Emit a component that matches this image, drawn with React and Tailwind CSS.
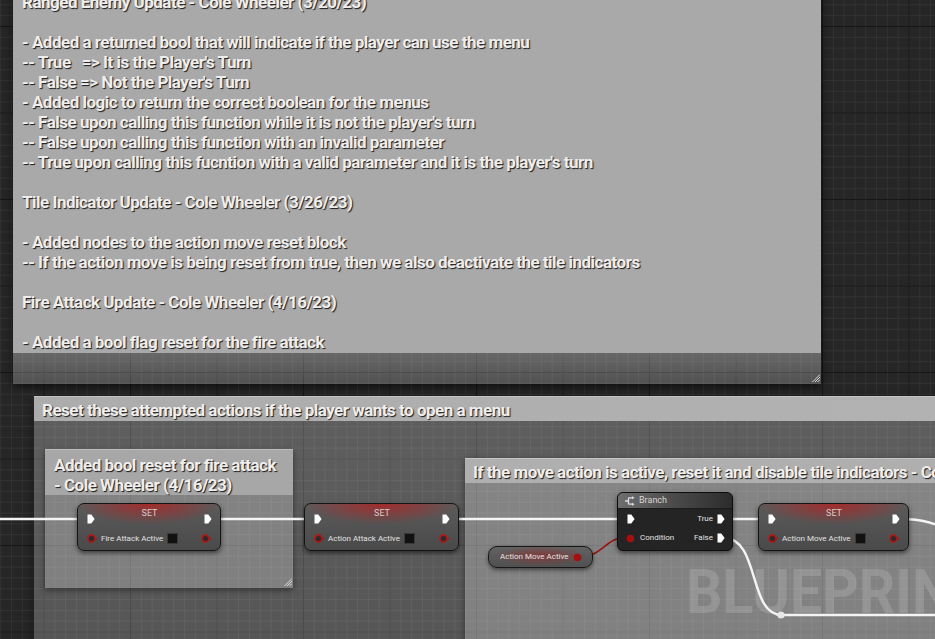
import React from "react";

const Exec = () => (
  <svg width="8" height="10" viewBox="0 0 8 10" className="block shrink-0">
    <path d="M0.5 0.5H4.3L7.6 5L4.3 9.5H0.5Z" fill="#ffffff" />
  </svg>
);

const PinHollow = () => (
  <svg width="11" height="9" viewBox="0 0 11 9" className="block shrink-0">
    <circle cx="4.5" cy="4.5" r="3.4" fill="#2b2b2b" stroke="#b31414" strokeWidth="1.6" />
    <path d="M8.7 2.7L10.7 4.5L8.7 6.3Z" fill="#b31414" />
  </svg>
);

const PinFilled = () => (
  <svg width="9" height="9" viewBox="0 0 9 9" className="block shrink-0">
    <circle cx="4.5" cy="4.5" r="3.8" fill="#a80e0e" />
  </svg>
);

const Grip = ({ className }) => (
  <svg width="8" height="8" viewBox="0 0 8 8" className={className}>
    <path d="M8 0.5L0.5 8M8 3L3 8M8 5.5L5.5 8" stroke="#d8d8d8" strokeWidth="1" />
  </svg>
);

const Check = () => (
  <div className="w-[11px] h-[11px] shrink-0 bg-[#111111] border border-[#3a3a3a]" />
);

function SetNode({ pos, label }) {
  return (
    <div
      className={`absolute top-[503px] h-[48px] rounded-[7px] border border-[#141414] bg-[linear-gradient(to_bottom,#5b5b5b,#4a4a4a)] shadow-[0_2px_5px_rgba(0,0,0,0.55)] overflow-hidden ${pos}`}
    >
      <div className="absolute inset-x-0 top-0 h-[20px] bg-[radial-gradient(ellipse_at_50%_0%,rgba(175,35,35,0.85),rgba(175,35,35,0)_72%)]" />
      <div className="relative flex items-start justify-between pl-[9px] pr-[8px] pt-[10px]">
        <Exec />
        <div className="-mt-[6px] text-[9px] leading-[10px] text-[#d0d0d0]">SET</div>
        <Exec />
      </div>
      <div className="relative flex items-center pl-[9px] pr-[8px] mt-[9px] h-[11px]">
        <PinHollow />
        <span className="ml-[3px] text-[8px] leading-none text-[#e2e2e2] whitespace-nowrap">{label}</span>
        <span className="ml-[4px]"><Check /></span>
        <span className="flex-1" />
        <PinHollow />
      </div>
    </div>
  );
}

const commentText = `Ranged Enemy Update - Cole Wheeler (3/20/23)

- Added a returned bool that will indicate if the player can use the menu
-- True   => It is the Player's Turn
-- False => Not the Player's Turn
- Added logic to return the correct boolean for the menus
-- False upon calling this function while it is not the player's turn
-- False upon calling this function with an invalid parameter
-- True upon calling this fucntion with a valid parameter and it is the player's turn

Tile Indicator Update - Cole Wheeler (3/26/23)

- Added nodes to the action move reset block
-- If the action move is being reset from true, then we also deactivate the tile indicators

Fire Attack Update - Cole Wheeler (4/16/23)

- Added a bool flag reset for the fire attack`;

const titleText =
  "text-[17px] leading-[20px] font-bold tracking-[-0.5px] text-[#eeeeee] [text-shadow:1px_1px_1px_rgba(0,0,0,0.85)] whitespace-pre";

export default function App() {
  return (
    <div className="relative w-[935px] h-[639px] overflow-hidden font-[Roboto,sans-serif] [background-color:#262626] [background-image:linear-gradient(to_right,#161616_1px,transparent_1px),linear-gradient(to_bottom,#161616_1px,transparent_1px),linear-gradient(to_right,#323232_1px,transparent_1px),linear-gradient(to_bottom,#323232_1px,transparent_1px)] [background-size:86.5px_86.5px,86.5px_86.5px,10.8125px_10.8125px,10.8125px_10.8125px] [background-position:43.5px_26px,43.5px_26px,43.5px_26px,43.5px_26px]">
      {/* Comment 1 */}
      <div className="absolute left-[13px] top-[-10px] w-[808px] h-[394px] flex flex-col shadow-[0_3px_8px_rgba(0,0,0,0.6)]">
        <div className={`h-[363px] shrink-0 bg-[#a9a9a9] pl-[9px] pt-[2px] ${titleText}`}>{commentText}</div>
        <div className="relative flex-1 bg-[linear-gradient(to_bottom,rgba(255,255,255,0.3),rgba(255,255,255,0.2))]">
          <Grip className="absolute right-[1px] bottom-[2px]" />
        </div>
      </div>

      {/* Comment 2 */}
      <div className="absolute left-[34px] top-[396px] w-[940px] h-[260px] flex flex-col shadow-[0_3px_8px_rgba(0,0,0,0.6)]">
        <div className={`h-[25px] shrink-0 bg-[linear-gradient(to_right,#acacac,#b2b2b2)] border-t border-[#c4c4c4] pl-[8px] pt-[3px] ${titleText}`}>
          Reset these attempted actions if the player wants to open a menu
        </div>
        <div className="flex-1 bg-[linear-gradient(to_bottom,rgba(255,255,255,0.26),rgba(255,255,255,0.22))]" />
      </div>

      {/* Comment 3 */}
      <div className="absolute left-[45px] top-[449px] w-[248px] h-[139px] flex flex-col shadow-[0_2px_6px_rgba(0,0,0,0.45)]">
        <div className={`h-[46px] shrink-0 bg-[#a7a7a7] border-t border-[#bdbdbd] pl-[9px] pt-[5px] ${titleText}`}>
          {"Added bool reset for fire attack\n- Cole Wheeler (4/16/23)"}
        </div>
        <div className="relative flex-1 bg-[rgba(255,255,255,0.24)]">
          <Grip className="absolute right-[1px] bottom-[2px]" />
        </div>
      </div>

      {/* Comment 4 */}
      <div className="absolute left-[465px] top-[458px] w-[500px] h-[200px] flex flex-col shadow-[0_2px_6px_rgba(0,0,0,0.45)]">
        <div className={`h-[25px] shrink-0 bg-[#afafaf] border-t border-[#c6c6c6] pl-[8px] pt-[3px] overflow-hidden ${titleText}`}>
          If the move action is active, reset it and disable tile indicators - Cole Wheeler (3/26/23)
        </div>
        <div className="flex-1 bg-[rgba(255,255,255,0.25)]" />
      </div>

      {/* Watermark */}
      <div className="absolute left-[686px] top-[561px] text-[62px] leading-none font-bold text-white/[0.15] origin-left scale-x-[0.92] whitespace-nowrap select-none">
        BLUEPRINT
      </div>

      {/* Wires */}
      <svg className="absolute inset-0" width="935" height="639" viewBox="0 0 935 639">
        <g stroke="#f4f4f4" strokeWidth="2.4" fill="none">
          <path d="M0 519H88" />
          <path d="M211 519H313" />
          <path d="M449 519H627" />
          <path d="M724 519H768" />
          <path d="M900 519C920 519 930 522 945 528" />
          <path d="M724 538C760 538 748 615 782 615H935" />
        </g>
        <circle cx="781" cy="615" r="3.6" fill="#e6e6e6" />
        <path d="M579 557C603 557 605 537 628 537" stroke="#9c1010" strokeWidth="1.6" fill="none" />
      </svg>

      {/* Nodes */}
      <SetNode pos="left-[77px] w-[144px]" label="Fire Attack Active" />
      <SetNode pos="left-[304px] w-[155px]" label="Action Attack Active" />
      <SetNode pos="left-[758px] w-[151px]" label="Action Move Active" />

      {/* Getter */}
      <div className="absolute left-[488px] top-[546px] w-[105px] h-[22px] rounded-[9px] border border-[#171717] bg-[linear-gradient(to_bottom,#626262,#505050)] shadow-[0_2px_4px_rgba(0,0,0,0.5)] overflow-hidden">
        <div className="absolute inset-0 bg-[radial-gradient(ellipse_at_50%_45%,rgba(150,40,40,0.65),rgba(150,40,40,0)_65%)]" />
        <div className="relative flex items-center h-full pl-[11px] pr-[10px]">
          <span className="text-[8px] leading-none text-[#e4e4e4] whitespace-nowrap">Action Move Active</span>
          <span className="flex-1" />
          <PinFilled />
        </div>
      </div>

      {/* Branch */}
      <div className="absolute left-[617px] top-[492px] w-[116px] h-[59px] rounded-[6px] border border-[#0d0d0d] bg-[#242424] shadow-[0_2px_5px_rgba(0,0,0,0.55)] overflow-hidden">
        <div className="h-[16px] flex items-center gap-[4px] pl-[7px] bg-[linear-gradient(to_right,#6e6e6e,#4d4d4d_45%,#2c2c2c)] border-b border-[#1a1a1a]">
          <svg width="10" height="10" viewBox="0 0 10 10" className="block">
            <path d="M0 5H3.5M3.5 1.8V8.2M3.5 1.8H7.5M3.5 8.2H7.5" stroke="#e0e0e0" strokeWidth="1.3" fill="none" />
            <path d="M7 0.3L9.6 1.8L7 3.3Z M7 6.7L9.6 8.2L7 9.7Z" fill="#e0e0e0" />
          </svg>
          <span className="text-[9px] leading-none text-[#d6d6d6]">Branch</span>
        </div>
        <div className="flex items-center justify-between pl-[9px] pr-[7px] mt-[5px] h-[10px]">
          <Exec />
          <div className="flex items-center gap-[4px]">
            <span className="text-[8px] leading-none text-[#e2e2e2]">True</span>
            <Exec />
          </div>
        </div>
        <div className="flex items-center justify-between pl-[8px] pr-[7px] mt-[9px] h-[10px]">
          <div className="flex items-center gap-[5px]">
            <PinFilled />
            <span className="text-[8px] leading-none text-[#e2e2e2]">Condition</span>
          </div>
          <div className="flex items-center gap-[4px]">
            <span className="text-[8px] leading-none text-[#e2e2e2]">False</span>
            <Exec />
          </div>
        </div>
      </div>
    </div>
  );
}
